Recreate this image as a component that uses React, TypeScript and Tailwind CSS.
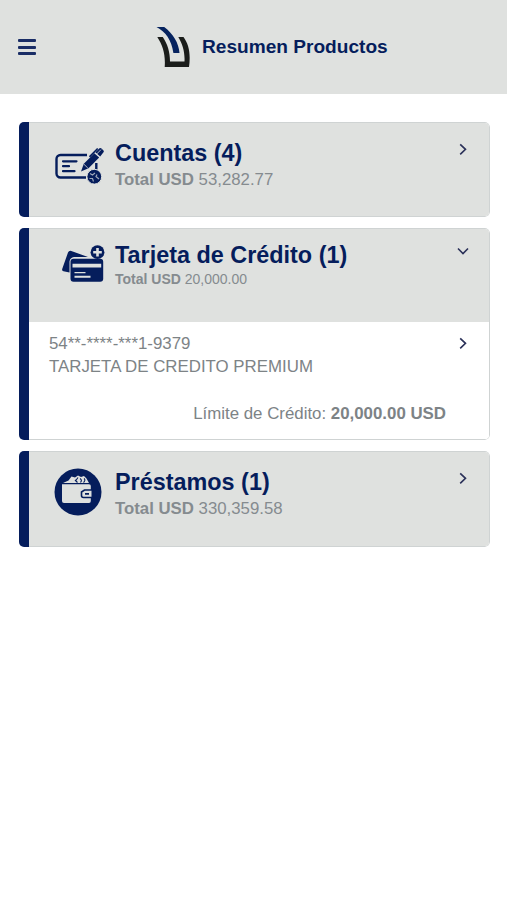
import type { ReactNode } from 'react'

function Logo() {
  return (
    <svg width="34" height="42" viewBox="0 0 34 42">
      <path
        d="M1.3 11H6.8C11.5 18 14 26 14 35.5H28.5C29 26 26.5 18 22.3 11H27.5C33 18.500 34.8 28 33 41H8.700C9.600 28.500 7 20 1.300 11Z"
        fill="#1b1d1b"
      />
      <path d="M.5 1H8.2C17 7.500 22.800 17 23.500 27H17.400C15.500 14 9.500 5.500.5 1Z" fill="#06235f" />
    </svg>
  )
}

function CuentasIcon() {
  return (
    <svg width="52" height="42" viewBox="0 0 52 42" fill="none" stroke="#051d5c">
      <path d="M33 10H6.500A4 4 0 0 0 2.500 14V28.500A4 4 0 0 0 6.500 32.500H32M42.300 18V24.500" strokeWidth="2.400" />
      <path d="M9 16.300H22.500M9 21.200H15M9 26.200H20.500" strokeWidth="2.200" strokeLinecap="round" />
      <path d="M27 26.500L29.800 18.800L40.300 8.300L45.200 12.600L34.500 23.300Z" fill="#051d5c" stroke="none" />
      <path d="M41.300 7.300L45.500 3.200Q46.500 2.500 47.500 3.500L49.500 5.500Q50.300 6.500 49.500 7.300L46.200 11.600Z" fill="#051d5c" stroke="none" />
      <path d="M35.500 11.800L43.700 3.500" strokeWidth="1.700" />
      <path d="M42.500 9.200L47 4.600M30 19.300L33.800 23" stroke="#dfe1df" strokeWidth=".8" />
      <circle cx="40.300" cy="31.700" r="7.400" fill="#051d5c" stroke="#dfe1df" strokeWidth="1" />
      <path d="M36 28.500L38.500 30L41 28M35.500 33.500L38.500 33.500L39.500 36.500M43 29.500L42 31.500L45 34" stroke="#9ca6b9" strokeWidth="1.200" />
    </svg>
  )
}

function TarjetaIcon() {
  return (
    <svg width="44" height="38" viewBox="0 0 44 38" fill="#051d5c">
      <path d="M.2 24L6 7.500Q7 5.400 9.300 6L26 12H12Q8 12.500 7.500 16.500V27.500L1.500 26.300Q-.3 26 .2 24Z" />
      <rect x="8.500" y="13.800" width="32.700" height="23" rx="3" />
      <path d="M10.500 18.800H39.200V22.500H10.500ZM12.500 27H23.500V28.300H12.500ZM12.500 30.800H28.500V32.800H12.500Z" fill="#dfe1df" />
      <circle cx="35.500" cy="7.200" r="6.900" />
      <path d="M35.500 2.900V11.500M31.200 7.200H39.800" stroke="#dfe1df" strokeWidth="2.600" />
    </svg>
  )
}

function PrestamosIcon() {
  return (
    <svg width="48" height="48" viewBox="0 0 48 48">
      <circle cx="24" cy="24" r="23.500" fill="#051d5c" />
      <path d="M9 15L14.500 12.500L17.500 8.500L21 9.500L24 7.500L27 9L30 8L32.500 10.500L35 15Z" fill="#dfe1df" />
      <path d="M21 12L23.500 14.500M24 9.500L21.500 13M26 10.500Q28.500 12 26.500 14.500M30 10.500Q32 12 29.500 14.500" stroke="#051d5c" strokeWidth="1.100" fill="none" />
      <path d="M8 16.300H35Q36.800 16.300 36.800 18V33Q36.800 35 35 35H10Q8 35 8 33Z" fill="#dfe1df" />
      <path d="M38.300 22H30.500L27.500 24V27.500Q27.500 29.500 29.500 29.500H38.300Z" fill="#dfe1df" stroke="#051d5c" strokeWidth="1.600" />
      <path d="M31 25.800H35" stroke="#051d5c" strokeWidth="1.800" />
    </svg>
  )
}

function Chevron({ open = false }: { open?: boolean }) {
  return (
    <svg className="block" width="14" height="14" viewBox="0 0 14 14" fill="none" stroke="#2b3159" strokeWidth="1.600">
      <path d={open ? 'M2 4.500L7 9.500L12 4.500' : 'M4.200 2.300L9.500 7.300L4.200 12.300'} />
    </svg>
  )
}

type CardProps = {
  title: string
  total: string
  icon: ReactNode
  open?: boolean
  headerClass: string
  children?: ReactNode
}

function ProductCard({ title, total, icon, open, headerClass, children }: CardProps) {
  return (
    <section className="flex overflow-hidden rounded-[5px]">
      <div className="w-[10px] shrink-0 bg-[#051d5c]" />
      <div className="min-w-0 flex-1 overflow-hidden rounded-r-[5px] border border-l-0 border-[#cfd3d3]">
        <div className={`flex bg-[#dfe1df] ${headerClass}`}>
          <div className="flex w-[86px] shrink-0">{icon}</div>
          <div className={open ? 'flex-1 pt-[12px]' : 'flex-1 pt-[16px]'}>
            <h2 className="text-[23.4px] leading-[28px] font-bold whitespace-nowrap text-[#051d5c]">{title}</h2>
            <p className={open ? 'text-[14px] leading-[21px] text-[#858b8f]' : 'text-[16.8px] leading-[25px] text-[#858b8f]'}>
              <b>Total USD</b> {total}
            </p>
          </div>
          <div className={open ? 'pt-[15px] pr-[19px]' : 'pt-[19px] pr-[19px]'}>
            <Chevron open={open} />
          </div>
        </div>
        {children}
      </div>
    </section>
  )
}

export default function App() {
  return (
    <div className="min-h-screen bg-white font-['Liberation_Sans',Arial,sans-serif]">
      <header className="flex h-[94px] bg-[#dfe1df] pl-[18px]">
        <button aria-label="Menú" className="mt-[39px] flex h-4 w-[18px] flex-col justify-between">
          <span className="h-[3px] w-full rounded-[1px] bg-[#1a2d66]" />
          <span className="h-[3px] w-full rounded-[1px] bg-[#1a2d66]" />
          <span className="h-[3px] w-full rounded-[1px] bg-[#1a2d66]" />
        </button>
        <div className="mt-[26px] ml-[120px] flex gap-3">
          <Logo />
          <h1 className="mt-[7px] text-[19.1px] leading-7 font-bold whitespace-nowrap text-[#051d5c]">Resumen Productos</h1>
        </div>
      </header>

      <main className="flex flex-col gap-[11px] pt-7 pr-[17px] pl-[19px]">
        <ProductCard
          title="Cuentas (4)"
          total="53,282.77"
          headerClass="h-[93px]"
          icon={
            <div className="pt-[22px] pl-[25px]">
              <CuentasIcon />
            </div>
          }
        />
        <ProductCard
          title="Tarjeta de Crédito (1)"
          total="20,000.00"
          headerClass="h-[93px]"
          open
          icon={
            <div className="pt-[16px] pl-[33px]">
              <TarjetaIcon />
            </div>
          }
        >
          <div className="h-[117px] bg-white pt-[10px] pl-5 text-[16.85px] text-[#7d8386]">
            <div className="flex justify-between pr-[19px]">
              <div className="leading-[23px]">
                <p>54**-****-***1-9379</p>
                <p>TARJETA DE CREDITO PREMIUM</p>
              </div>
              <div className="pt-[4px]">
                <Chevron />
              </div>
            </div>
            <p className="mt-6 pr-[43px] text-right leading-[23px]">
              Límite de Crédito: <b>20,000.00 USD</b>
            </p>
          </div>
        </ProductCard>
        <ProductCard
          title="Préstamos (1)"
          total="330,359.58"
          headerClass="h-[94px]"
          icon={
            <div className="pt-[16px] pl-[25px]">
              <PrestamosIcon />
            </div>
          }
        />
      </main>
    </div>
  )
}
